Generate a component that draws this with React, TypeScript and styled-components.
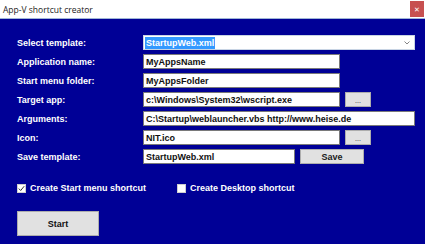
import React from 'react';
import styled, { createGlobalStyle } from 'styled-components';

const GlobalStyle = createGlobalStyle`
  html, body {
    margin: 0;
    padding: 0;
    background: #000096;
  }
  body {
    font-family: "Liberation Sans", Arial, sans-serif;
  }
`;

const Window = styled.div`
  width: 425px;
  height: 244px;
  display: flex;
  flex-direction: column;
  background: #000096;
  overflow: hidden;
`;

const TitleBar = styled.div`
  height: 18px;
  background: #ffffff;
  border-bottom: 1px solid #9fb6d6;
  display: flex;
  align-items: center;
  justify-content: space-between;
  padding-left: 3px;
  font-family: "Open Sans", "Noto Sans", sans-serif;
  font-size: 8.5px;
  color: #222;
`;

const CloseButton = styled.div`
  width: 14px;
  height: 16px;
  margin-right: 1px;
  background: #c75050;
  color: #fff;
  font-size: 7px;
  display: flex;
  align-items: center;
  justify-content: center;
`;

const Body = styled.div`
  flex: 1;
  padding: 16px 0 0 17px;
  display: flex;
  flex-direction: column;
`;

const Form = styled.div`
  display: grid;
  grid-template-columns: 126px auto;
  row-gap: 4px;
  align-items: center;
`;

const Label = styled.div`
  color: #ffffff;
  font-weight: bold;
  font-size: 9px;
`;

const Field = styled.div`
  display: flex;
  gap: 5px;
  height: 15px;
`;

const Input = styled.div<{ $w: number }>`
  width: ${(p) => p.$w}px;
  height: 15px;
  box-sizing: border-box;
  background: #ffffff;
  border: 1px solid #7a7a7a;
  color: #111;
  font-weight: bold;
  font-size: 9px;
  padding-left: 2px;
  display: flex;
  align-items: center;
  white-space: nowrap;
  overflow: hidden;
`;

const Combo = styled(Input)`
  justify-content: space-between;
  padding-left: 1px;
  padding-right: 4px;
  border-color: #c8d4e4;
`;

const Selected = styled.span`
  background: #3399ff;
  color: #ffffff;
  padding: 1px 1px;
`;

const SmallButton = styled.div<{ $w: number }>`
  width: ${(p) => p.$w}px;
  height: 15px;
  box-sizing: border-box;
  background: #e1e1e1;
  border: 1px solid #adadad;
  color: #222;
  font-weight: bold;
  font-size: 9px;
  display: flex;
  align-items: center;
  justify-content: center;
`;

const Dots = styled.span`
  font-size: 7px;
  font-weight: normal;
  margin-top: 2px;
`;

const CheckRow = styled.div`
  display: flex;
  align-items: center;
  margin-top: 19px;
  gap: 31px;
`;

const Check = styled.label`
  display: flex;
  align-items: center;
  gap: 4px;
  color: #ffffff;
  font-weight: bold;
  font-size: 9px;
`;

const Box = styled.span`
  width: 9px;
  height: 9px;
  box-sizing: border-box;
  background: #ffffff;
  border: 1px solid #cfcfcf;
  display: flex;
  align-items: center;
  justify-content: center;
`;

const StartButton = styled.div`
  margin-top: 18px;
  width: 82px;
  height: 25px;
  box-sizing: border-box;
  background: #e1e1e1;
  border: 1px solid #adadad;
  color: #111;
  font-weight: bold;
  font-size: 9px;
  display: flex;
  align-items: center;
  justify-content: center;
`;

const Tick = () => (
  <svg width="7" height="7" viewBox="0 0 7 7">
    <path d="M0.8 3.6 L2.7 5.5 L6.2 1.2" fill="none" stroke="#333" strokeWidth="1" />
  </svg>
);

const Chevron = () => (
  <svg width="6" height="4" viewBox="0 0 6 4">
    <path d="M0.5 0.5 L3 3 L5.5 0.5" fill="none" stroke="#777" strokeWidth="0.9" />
  </svg>
);

const App: React.FC = () => {
  return (
    <>
      <GlobalStyle />
      <Window>
        <TitleBar>
          <span>App-V shortcut creator</span>
          <CloseButton>✕</CloseButton>
        </TitleBar>
        <Body>
          <Form>
            <Label>Select template:</Label>
            <Field>
              <Combo $w={272}>
                <Selected>StartupWeb.xml</Selected>
                <Chevron />
              </Combo>
            </Field>

            <Label>Application name:</Label>
            <Field>
              <Input $w={197}>MyAppsName</Input>
            </Field>

            <Label>Start menu folder:</Label>
            <Field>
              <Input $w={197}>MyAppsFolder</Input>
            </Field>

            <Label>Target app:</Label>
            <Field>
              <Input $w={197}>c:\Windows\System32\wscript.exe</Input>
              <SmallButton $w={26}><Dots>...</Dots></SmallButton>
            </Field>

            <Label>Arguments:</Label>
            <Field>
              <Input $w={272}>C:\Startup\weblauncher.vbs http://www.heise.de</Input>
            </Field>

            <Label>Icon:</Label>
            <Field>
              <Input $w={197}>NIT.ico</Input>
              <SmallButton $w={26}><Dots>...</Dots></SmallButton>
            </Field>

            <Label>Save template:</Label>
            <Field>
              <Input $w={152}>StartupWeb.xml</Input>
              <SmallButton $w={64}>Save</SmallButton>
            </Field>
          </Form>

          <CheckRow>
            <Check>
              <Box><Tick /></Box>
              Create Start menu shortcut
            </Check>
            <Check>
              <Box />
              Create Desktop shortcut
            </Check>
          </CheckRow>

          <StartButton>Start</StartButton>
        </Body>
      </Window>
    </>
  );
};

export default App;
